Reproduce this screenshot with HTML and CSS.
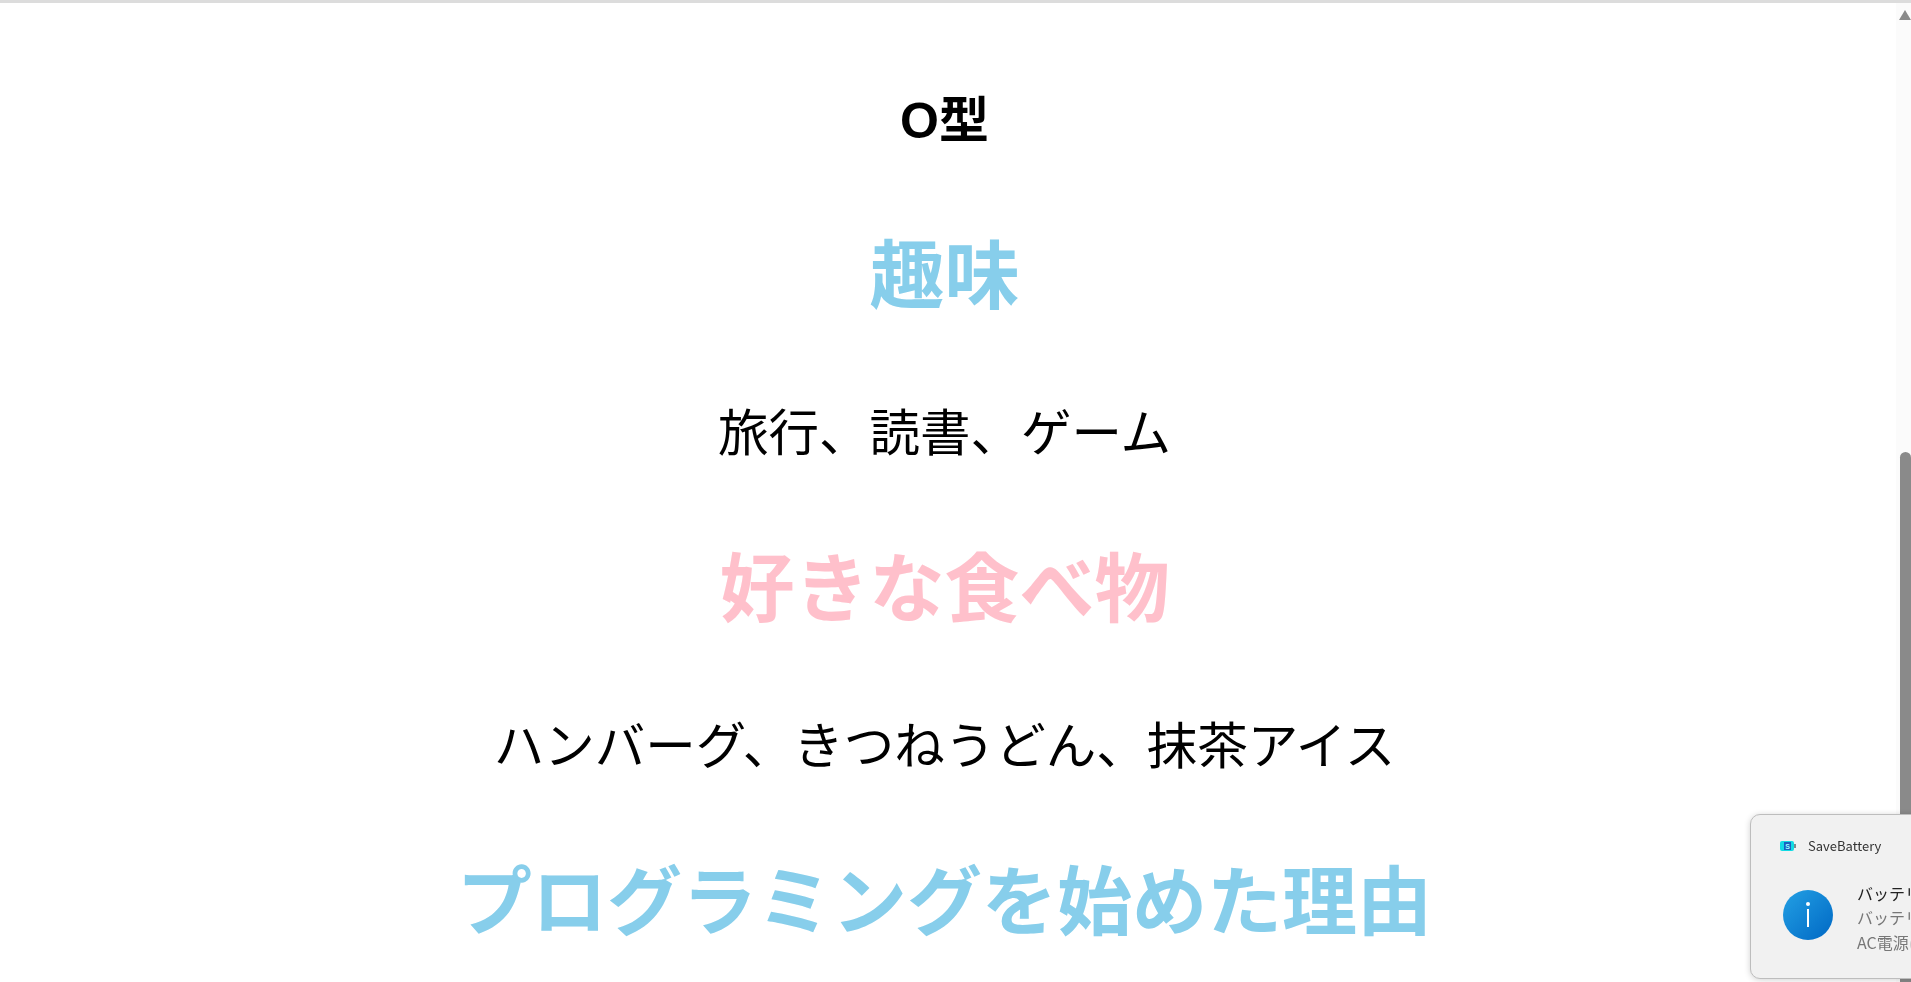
FILE: index.html
```html
<!DOCTYPE html>
<html lang="ja">
<head>
  <meta charset="UTF-8" />
  <meta name="viewport" content="width=device-width, initial-scale=1" />
  <title>プロフィール</title>
  <link rel="stylesheet" href="styles.css">
</head>
<body>

<div class="top-line"></div>

<div class="page">
  <div class="content">
    <p class="blood">O型</p>
    <h2 class="blue">趣味</h2>
    <p class="text">旅行、読書、ゲーム</p>
    <h2 class="pink">好きな食べ物</h2>
    <p class="text">ハンバーグ、きつねうどん、抹茶アイス</p>
    <h2 class="blue">プログラミングを始めた理由</h2>
  </div>
  <div class="scrollbar">
    <svg class="arrow" width="12" height="10" viewBox="0 0 12 10"><path d="M0 10 L6 0 L12 10 Z" fill="#8a8a8a"/></svg>
    <div class="thumb"></div>
  </div>
</div>

<div class="toast">
  <div class="toast-head">
    <svg width="16" height="10" viewBox="0 0 16 10">
      <rect x="0" y="0" width="14" height="10" rx="2" fill="#12dbe4"/>
      <rect x="4" y="1" width="7" height="8" fill="#1a5fc0"/>
      <text x="7.5" y="8" font-size="7" font-family="Liberation Sans" font-weight="bold" text-anchor="middle" fill="#9ff">S</text>
      <rect x="14" y="3" width="2" height="4" fill="#7c8a90"/>
    </svg>
    <span>SaveBattery</span>
  </div>
  <div class="toast-body">
    <svg class="info" width="50" height="50" viewBox="0 0 50 50">
      <defs>
        <linearGradient id="infoFill" x1="0" y1="0" x2="1" y2="1">
          <stop offset="0" stop-color="#23a0e4"/>
          <stop offset="1" stop-color="#0068c4"/>
        </linearGradient>
      </defs>
      <circle cx="25" cy="25" r="25" fill="url(#infoFill)"/>
      <circle cx="25" cy="14" r="2" fill="#fff"/>
      <rect x="24" y="19" width="2" height="18" fill="#fff"/>
    </svg>
    <div class="toast-text">
      <div class="toast-title">バッテリー残量が少なくなっています</div>
      <div>バッテリー残量が少なくなっています</div>
      <div>AC電源に接続してください</div>
    </div>
  </div>
</div>

</body>
</html>
```

FILE: styles.css
```css
html, body {
  margin: 0;
  height: 100%;
  overflow: hidden;
  background: #fff;
}
body {
  font-family: "Liberation Sans", "Noto Sans CJK JP", sans-serif;
  color: #000;
}
.top-line {
  height: 3px;
  background: #dcdcdc;
}
.page {
  display: flex;
  height: 979px;
}
.content {
  flex: 1;
  text-align: center;
  padding-right: 7px;
  padding-top: 93px;
}
.content p, .content h2 {
  margin: 0;
}
.blood {
  font-size: 50px;
  font-weight: bold;
  line-height: 50px;
  margin-bottom: 81px !important;
}
h2 {
  font-size: 75px;
  font-weight: bold;
  line-height: 100px;
}
.blue {
  color: #87ceeb;
}
.pink {
  color: #ffc0cb;
}
.text {
  font-size: 50.5px;
  line-height: 56px;
  padding: 79px 0 78px;
}
.scrollbar {
  width: 15px;
  position: relative;
  background: #fbfbfb;
}
.arrow {
  display: block;
  margin: 7px 0 0 3px;
}
.thumb {
  position: absolute;
  top: 449px;
  bottom: 0;
  left: 4px;
  right: 0;
  background: #8a8a8a;
  border-radius: 6px 6px 0 0;
}
.toast {
  position: fixed;
  left: 1750px;
  top: 814px;
  width: 360px;
  height: 165px;
  box-sizing: border-box;
  background: #f1f1f1;
  border: 1px solid #bdbdbd;
  border-radius: 10px;
  box-shadow: 0 1px 6px rgba(0, 0, 0, 0.18);
  font-family: "Noto Sans CJK JP", sans-serif;
  color: #777;
  font-size: 16px;
}
.toast-head {
  display: flex;
  align-items: center;
  gap: 12px;
  padding: 21px 0 0 29px;
  font-size: 13px;
  line-height: 20px;
  color: #333;
}
.toast-body {
  display: flex;
  align-items: flex-start;
  gap: 24px;
  padding: 21px 0 0 32px;
}
.info {
  flex: none;
  margin-top: 13px;
}
.toast-text {
  margin-top: 4px;
  line-height: 24.4px;
  white-space: nowrap;
}
.toast-title {
  color: #222;
}
```
